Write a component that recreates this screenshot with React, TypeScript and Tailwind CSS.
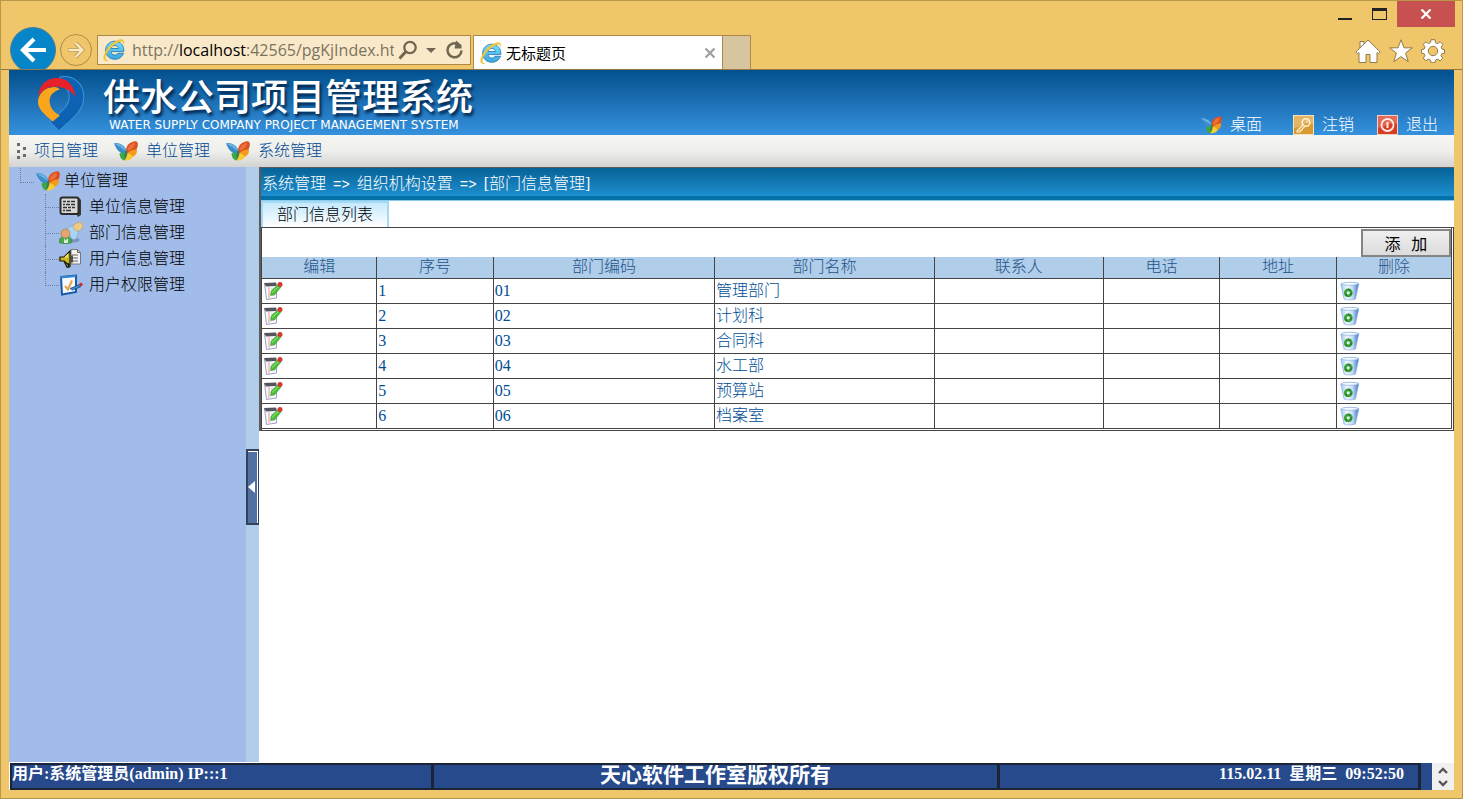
import React from "react";

const cjk = "font-['Liberation_Serif','Noto_Sans_CJK_SC',sans-serif]";

function IeLogo() {
  return (
    <svg viewBox="0 0 24 24" className="h-6 w-6 shrink-0">
      <defs>
        <linearGradient id="ie" x1="0" y1="0" x2="0" y2="1">
          <stop offset="0" stopColor="#7fdcf8" />
          <stop offset="0.5" stopColor="#55c3ef" />
          <stop offset="1" stopColor="#3aa5de" />
        </linearGradient>
      </defs>
      <path
        d="M12.800 3.200c-5.200 0-9.200 3.900-9.200 9.100 0 5.300 4 9 9.200 9 4.200 0 7.300-2.200 8.700-6h-5.600c-.7 1.200-1.700 1.700-3.100 1.700-2.200 0-3.700-1.300-3.800-3.400h12.800c.5-6.100-3.200-10.400-9-10.400zm-3.700 7.300c.3-1.900 1.700-3 3.700-3s3.400 1.100 3.600 3z"
        fill="url(#ie)" stroke="#1c74b0" strokeWidth="0.800"
      />
      <path
        d="M5.500 22.600c-4.300.6-4.600-3.100-2.500-7.700C5.500 9.400 11.500 3.600 16.800 2c3.800-1.200 5.700.3 4.700 3.700.1-2.300-1.500-2.900-4.300-1.900C12.400 5.600 7.200 10.500 4.600 15.600c-1.800 3.600-1.900 6.400.9 7z"
        fill="#fbcf3a" stroke="#dda21c" strokeWidth="0.400"
      />
    </svg>
  );
}

function Butterfly({ small = false }: { small?: boolean }) {
  return (
    <svg viewBox="0 0 24 20" className={small ? "h-[18px] w-[21px] shrink-0" : "h-5 w-6 shrink-0"}>
      <path d="M0 2.200C4.500 1.500 10.500 3.500 13 10.500L12.500 14C6.500 13 2 8.500 0 2.200z" fill="#3a8ccb" />
      <path d="M0 2.200C5 2 10.500 4.500 12.800 11 8 6.800 4 5 0 2.200z" fill="#6cb4e0" />
      <path d="M5.500 12.500c2-1.200 5-1 7 .5 1 3-.3 5-2 6.500-3-.3-4.800-3.500-5-7z" fill="#3aa845" />
      <path d="M12.800 12.500c-2-5.500 1-11 8-12.200 3-.4 3.400 2.200 2.800 5.200-.8 4-4.500 6.200-10.800 7z" fill="#dd4f20" />
      <path d="M13.500 10C13.500 6 16 2.500 21 1.500 21.500 5.500 18 9 13.500 10z" fill="#ea7038" />
      <path d="M12.800 12.500c3.500-3 7-4.500 10.200-4 .2 3.500-1.500 6.500-5 7.500z" fill="#f39a1c" />
      <path d="M12.600 12c2.600.3 5.400 1.500 6.400 4-1.500 2.800-5.500 4-8.500 3.300 1.300-2 2-4.300 2.100-7.300z" fill="#f8cc35" />
      <path d="M12.200 8.500c1.200 1.500 1.500 4 .7 6.500l-2.200 4c-.7-3.500-.2-7.500 1.500-10.500z" fill="#3d7f4f" />
    </svg>
  );
}

function BrandLogo() {
  return (
    <svg viewBox="0 0 50 58" className="h-[60px] w-[52px] shrink-0">
      <path d="M24 3C36 0 47 9 47 22c0 14-11 21-24 33l-9-9c10-9 19-14 19-24 0-5-3-10-9-12z" fill="#0d62b4" stroke="#3f93d8" strokeWidth="1" />
      <path d="M3 24c3-8 8-11 13-11 4-1 6 0 8 2-7 2-10 6-10 11 0 6 4 11 10 14l-7 6C9 39 1 33 3 24z" fill="#faa51b" />
      <path d="M3 22C4 9 13 3 23 4c9 0 15 8 16 18-4-5-8-8-14-9-8-3-18 1-22 9z" fill="#e8202a" />
    </svg>
  );
}

function KeyIcon() {
  return (
    <svg viewBox="0 0 21 20" className="h-5 w-[21px] shrink-0">
      <rect x="0.500" y="0.500" width="20" height="19" fill="#d89b32" stroke="#f6e3ba" />
      <path d="M1 1h19v8C13 7 7 12 1 13z" fill="#e5b566" />
      <circle cx="13" cy="7.500" r="3.800" fill="none" stroke="#fff3d8" strokeWidth="1.500" />
      <path d="M10 10l-6 6v1h3l.5-1.500 1.500-.5.5-1.500 2-1.500" fill="none" stroke="#fff3d8" strokeWidth="1.200" />
      <circle cx="14" cy="6.500" r="0.900" fill="#fff3d8" />
    </svg>
  );
}

function PowerIcon() {
  return (
    <svg viewBox="0 0 21 20" className="h-5 w-[21px] shrink-0">
      <rect x="0.500" y="0.500" width="20" height="19" fill="#d63d22" stroke="#f7cfc4" />
      <path d="M1 1h19v8C13 7 7 12 1 13z" fill="#e26a54" />
      <circle cx="10.500" cy="10" r="6" fill="none" stroke="#ffe9e4" strokeWidth="1.800" />
      <path d="M10.500 7v6" stroke="#ffe9e4" strokeWidth="2" />
    </svg>
  );
}

function BoardIcon() {
  return (
    <svg viewBox="0 0 22 22" className="h-[22px] w-[22px] shrink-0">
      <path d="M3 2h17l2 2v15l-3 2-1-2H3z" fill="#3b3b3b" />
      <rect x="1.500" y="1.500" width="18" height="16.500" rx="2" fill="#d8d8d8" stroke="#2b2b2b" strokeWidth="2" />
      <path d="M4 5.500h3m1 0h3m1 0h4M4 8.500h2m1 0h4m1 0h4M4 11.500h4m1 0h3m1 0h3M4 14.500h2m1 0h5" stroke="#333" strokeWidth="1.500" />
    </svg>
  );
}

function PeopleIcon() {
  return (
    <svg viewBox="0 0 24 22" className="h-[22px] w-6 shrink-0">
      <ellipse cx="15" cy="18" rx="5.500" ry="2.500" fill="#7d93c4" />
      <path d="M8 6l8-3.500 4 4.500-2 8c-1 3-4 3-6 1z" fill="#a9d6f5" stroke="#6ba3d0" strokeWidth="0.600" />
      <path d="M14 4c2-3.500 8-4.500 9.500-2 1 3-1 6.500-4 7-3 0-5.500-2-5.500-5z" fill="#ecc98b" stroke="#c0954e" strokeWidth="0.600" />
      <path d="M0 20.500c0-4 2-6 6-6s7 2 7 6c-3 1.500-9.500 1.500-13 0z" fill="#4aa84e" stroke="#2d7d36" strokeWidth="0.600" />
      <path d="M5 16l1.500 2.500L9 16v5H5z" fill="#d9efd6" />
      <circle cx="6.500" cy="11.500" r="4.500" fill="#e3a672" stroke="#b0713a" strokeWidth="0.600" />
    </svg>
  );
}

function SpeakerIcon() {
  return (
    <svg viewBox="0 0 22 22" className="h-[22px] w-[22px] shrink-0">
      <path d="M12 1.500h6.500l3 3V16H12z" fill="#f3f3f3" stroke="#777" />
      <path d="M18.500 1.500v3h3M13 7h6M13 10h6M13 13h6" fill="none" stroke="#666" />
      <path d="M1 9h4l6-6v15l-6-5H1z" fill="#cdb422" stroke="#191900" strokeWidth="1.200" />
      <path d="M3 9.500h2l4-4v4z" fill="#f2e56e" />
      <path d="M5 13l3 6h2l-1-4M13 7.500v7" fill="none" stroke="#191900" strokeWidth="1.300" />
    </svg>
  );
}

function ChecklistIcon() {
  return (
    <svg viewBox="0 0 24 22" className="h-[22px] w-6 shrink-0">
      <path d="M2 3l15-1.500V18L3 20.500z" fill="#f6f9ff" stroke="#165ba8" strokeWidth="2" />
      <path d="M1 3.500L17 2" stroke="#3584d0" strokeWidth="2" />
      <path d="M6 12l3 3.500L13 6.500" fill="none" stroke="#e9a13b" strokeWidth="2" />
      <path d="M11 14.500l9.500-4 1 2.500-8 3z" fill="#3e8bd2" stroke="#183f78" strokeWidth="0.700" />
      <circle cx="22" cy="10.500" r="1.700" fill="#c8302a" />
    </svg>
  );
}

function EditIcon() {
  return (
    <svg viewBox="0 0 20 20" className="h-5 w-5">
      <path d="M1.500 2.500h12V17l-10 1.500z" fill="#f7f7fc" stroke="#9ea1c2" strokeWidth="1" />
      <path d="M1 2l12-.5V5l-10 .5z" fill="#55555d" />
      <path d="M6 6v11" stroke="#f2c4bd" strokeWidth="1.800" />
      <path d="M8 8h3" stroke="#c6c6d8" />
      <path d="M7.500 14.500l.7-4.500L14.500 4l3.500 2-6.500 8z" fill="#4cbe38" stroke="#338c2a" strokeWidth="0.500" />
      <path d="M9 11.500l7-6.500" stroke="#9be97c" />
      <circle cx="17" cy="3.500" r="2.500" fill="#d5392c" />
    </svg>
  );
}

function RecycleIcon() {
  return (
    <svg viewBox="0 0 20 20" className="h-5 w-5">
      <defs>
        <linearGradient id="bin" x1="0" y1="0" x2="1" y2="0">
          <stop offset="0" stopColor="#9cc3f0" />
          <stop offset="0.350" stopColor="#f2f8fe" />
          <stop offset="0.650" stopColor="#c4dbf6" />
          <stop offset="1" stopColor="#3874c8" />
        </linearGradient>
      </defs>
      <path d="M.8 3C6 1 13 1 18.800 2.500L15.500 18c-3 1.300-8 1.300-11.500 0z" fill="url(#bin)" stroke="#7fa7dc" strokeWidth="0.600" />
      <ellipse cx="9.800" cy="2.800" rx="8.500" ry="1.500" fill="#f5faff" stroke="#8db0de" strokeWidth="0.700" />
      <circle cx="8.300" cy="11.800" r="3" fill="none" stroke="#3aa436" strokeWidth="2.800" />
      <path d="M8 8l2.500 1.500M5 13.500l2 1.500M11.500 11.500l-1 2.500" stroke="#237c22" strokeWidth="1.200" />
    </svg>
  );
}

const treeItems = [
  { label: "单位信息管理", icon: <BoardIcon /> },
  { label: "部门信息管理", icon: <PeopleIcon /> },
  { label: "用户信息管理", icon: <SpeakerIcon /> },
  { label: "用户权限管理", icon: <ChecklistIcon /> },
];

const columns = [
  { label: "编辑", width: "w-[9.700%]" },
  { label: "序号", width: "w-[9.800%]" },
  { label: "部门编码", width: "w-[18.600%]" },
  { label: "部门名称", width: "w-[18.500%]" },
  { label: "联系人", width: "w-[14.200%]" },
  { label: "电话", width: "w-[9.800%]" },
  { label: "地址", width: "w-[9.800%]" },
  { label: "删除", width: "w-[9.600%]" },
];

const departments = ["管理部门", "计划科", "合同科", "水工部", "预算站", "档案室"];

function BrowserChrome() {
  return (
    <header className="border-b border-[#8f7a45]">
      <div className="flex h-[26px] items-start justify-end pr-[7px]">
        <button aria-label="最小化" className="flex h-[26px] w-8 items-end justify-center pb-[7px]">
          <span className="h-[2px] w-[14px] bg-[#222]" />
        </button>
        <button aria-label="最大化" className="flex h-[26px] w-9 items-center justify-center">
          <span className="h-3 w-[15px] border border-t-[3px] border-[#222]" />
        </button>
        <button aria-label="关闭" className="flex h-[26px] w-[58px] items-center justify-center bg-[#c75050]">
          <svg viewBox="0 0 12 10" className="h-[10px] w-3">
            <path d="M1.500.5l9 9M10.500.5l-9 9" stroke="#fff" strokeWidth="2.200" />
          </svg>
        </button>
      </div>
      <div className="flex h-[42px] overflow-hidden pl-[9px]">
        <button aria-label="后退" className="flex h-[46px] w-[46px] shrink-0 items-center justify-center rounded-full border border-[#4f7f92] bg-[#0686c8]">
          <svg viewBox="0 0 26 26" className="h-[26px] w-[26px]">
            <path d="M14 2L3 13l11 11M3 13h23" fill="none" stroke="#fff" strokeWidth="4.200" />
          </svg>
        </button>
        <button aria-label="前进" className="mt-[7px] ml-1 flex h-8 w-8 shrink-0 items-center justify-center rounded-full border border-[#b08c45]">
          <svg viewBox="0 0 18 18" className="h-[18px] w-[18px]">
            <path d="M8.500 2l7 7-7 7M15 9H1" fill="none" stroke="#b99751" strokeWidth="4" />
            <path d="M8.500 2l7 7-7 7M15 9H1.500" fill="none" stroke="#fbe9c4" strokeWidth="2.400" />
          </svg>
        </button>
        <div className="mt-2 ml-[5px] flex h-[30px] w-[374px] shrink-0 items-center border border-[#ab8a45] bg-[#fae9c8] pr-1 pl-1">
          <IeLogo />
          <div className="ml-[6px] w-[262px] overflow-hidden font-['Open_Sans',sans-serif] text-[16px] leading-6 whitespace-nowrap text-[#7a7361]">
            http://<span className="text-black">localhost</span>:42565/pgKjIndex.ht
          </div>
          <button aria-label="搜索" className="ml-1">
            <svg viewBox="0 0 20 20" className="h-5 w-5">
              <circle cx="12" cy="7.500" r="5.700" fill="none" stroke="#6f6751" strokeWidth="2.300" />
              <path d="M8 11.500L1.500 18.500" stroke="#6f6751" strokeWidth="3" />
            </svg>
          </button>
          <button aria-label="地址列表" className="ml-2">
            <svg viewBox="0 0 10 5" className="h-[5px] w-[10px]"><path d="M0 0h10L5 5z" fill="#6f6751" /></svg>
          </button>
          <button aria-label="刷新" className="ml-[9px]">
            <svg viewBox="0 0 20 20" className="h-5 w-5">
              <path d="M12.500 4A7 7 0 1 0 16.500 10.500" fill="none" stroke="#6f6751" strokeWidth="2.500" />
              <path d="M11 .5L16.500 5v3.500H9.500z" fill="#6f6751" />
            </svg>
          </button>
        </div>
        <div className="mt-2 ml-[2px] flex w-[250px] shrink-0 items-center border border-b-0 border-[#ab8a45] bg-white pr-[6px] pl-[5px]">
          <IeLogo />
          <span className="ml-[3px] font-['Noto_Sans_CJK_SC',sans-serif] text-[15px] leading-6 text-black">无标题页</span>
          <button aria-label="关闭标签" className="ml-auto">
            <svg viewBox="0 0 12 12" className="h-3 w-3"><path d="M1.500 1.500l9 9M10.500 1.500l-9 9" stroke="#a0a0a0" strokeWidth="2.300" /></svg>
          </button>
        </div>
        <button aria-label="新标签" className="mt-2 w-7 shrink-0 border border-b-0 border-l-0 border-[#ab8a45] bg-[#d7c59f]" />
        <div className="ml-auto flex items-center gap-2 pt-[6px] pr-[17px]">
          <button aria-label="主页">
            <svg viewBox="0 0 26 26" className="h-[26px] w-[26px]">
              <path d="M13 2L.8 14l1.700 1.800L4 14.500v10h7v-8h4v8h7v-10l1.500 1.300 1.700-1.800L13 2 9 6V3.500H5V10z" fill="#fff" stroke="#8f7a4b" strokeWidth="1" />
            </svg>
          </button>
          <button aria-label="收藏夹">
            <svg viewBox="0 0 24 24" className="h-6 w-6">
              <path d="M12 .8l3 8h8.300l-6.700 5.200 2.600 8.600L12 17.700l-7.200 4.900L7.400 14 .7 8.800H9z" fill="#fff" stroke="#8f7a4b" strokeWidth="1" />
            </svg>
          </button>
          <button aria-label="工具">
            <svg viewBox="0 0 24 24" className="h-6 w-6">
              <path fillRule="evenodd" d="M10 .7h4l.5 3 2.200.9 2.500-1.800 2.700 2.700-1.700 2.600.8 2 2.500.4v3.600l-2.700.6-.8 2 1.800 2.500-2.700 2.700-2.500-1.800-2.100.9-.5 2.700h-4l-.5-2.700-2.200-.9-2.500 1.700-2.600-2.700L4 16.700l-.9-2.100-2.600-.5v-3.600l2.600-.4.9-2.200-1.800-2.500 2.700-2.600 2.500 1.700 2.100-.9zM12 7.300a4.700 4.700 0 1 0 0 9.400 4.700 4.700 0 0 0 0-9.400z" fill="#fff" stroke="#8f7a4b" strokeWidth="1" />
            </svg>
          </button>
        </div>
      </div>
    </header>
  );
}

function AppHeader() {
  return (
    <div className="flex h-[65px] items-start justify-between bg-linear-to-b from-[#02508e] to-[#3592de] pl-[26px]">
      <div className="flex items-start">
        <div className="pt-1"><BrandLogo /></div>
        <div className="ml-4 text-white">
          <h1 className="pt-1 font-['Noto_Sans_CJK_SC',sans-serif] text-[37px] leading-[42px] font-medium whitespace-nowrap [text-shadow:2px_3px_3px_#02264d]">
            供水公司项目管理系统
          </h1>
          <p className="pt-[2px] pl-[6px] font-['DejaVu_Sans',sans-serif] text-[12px] leading-[14px] whitespace-nowrap">
            WATER SUPPLY COMPANY PROJECT MANAGEMENT SYSTEM
          </p>
        </div>
      </div>
      <nav className={`flex gap-[23px] self-end pr-4 text-[16px] leading-[21px] font-light text-white ${cjk}`}>
        <a href="#desktop" className="flex items-center gap-2 pr-2"><Butterfly small />桌面</a>
        <a href="#logout" className="flex items-center gap-2"><KeyIcon />注销</a>
        <a href="#exit" className="flex items-center gap-2"><PowerIcon />退出</a>
      </nav>
    </div>
  );
}

function MenuBar() {
  return (
    <nav className={`flex h-8 items-center bg-linear-to-b from-[#f5f5f1] via-[#efefec] to-[#d3d3d2] pl-2 text-[16px] leading-6 font-light text-[#004a94] ${cjk}`}>
      <svg viewBox="0 0 10 18" className="mr-[7px] h-[18px] w-[10px]">
        <path d="M0 1h3v3H0zM0 8h3v3H0zM0 14h3v3H0zM6 5h3v3H6zM6 12h3v3H6z" fill="#6b6b6b" />
      </svg>
      <a href="#project">项目管理</a>
      <a href="#unit" className="ml-4 flex items-center gap-2"><Butterfly />单位管理</a>
      <a href="#system" className="ml-4 flex items-center gap-2"><Butterfly />系统管理</a>
    </nav>
  );
}

function Sidebar() {
  return (
    <aside className={`w-[237px] shrink-0 bg-[#a1bce8] pt-px text-[16px] leading-[26px] font-light text-black ${cjk}`}>
      <div className="flex h-[26px] items-center pl-[11px]">
        <span className="mr-[2px] h-[15px] w-[14px] self-start border-b border-l border-dotted border-[#6f7f9f]" />
        <Butterfly />
        <a href="#unit" className="ml-1">单位管理</a>
      </div>
      <ul className="pl-9">
        {treeItems.map((item, i) => (
          <li key={item.label} className="flex h-[26px] items-center">
            <span className={`flex w-[14px] flex-col self-stretch ${i < 3 ? "border-l border-dotted border-[#6f7f9f]" : ""}`}>
              <span className={`h-[14px] border-b border-dotted border-[#6f7f9f] ${i < 3 ? "" : "border-l"}`} />
            </span>
            <span className="flex w-[30px] shrink-0">{item.icon}</span>
            <a href="#item">{item.label}</a>
          </li>
        ))}
      </ul>
    </aside>
  );
}

function Arrow() {
  return <span className="px-[7px] font-['Liberation_Mono',monospace] text-[14px] font-normal">=&gt;</span>;
}

function Content() {
  return (
    <main className={`min-w-0 flex-1 bg-white text-[16px] font-light ${cjk}`}>
      <div className="border-t border-l-2 border-[#5b5b5b]">
        <div className="h-8 border-b-4 border-[#0370a6] bg-linear-to-b from-[#066397] to-[#1e8fd0] pl-px leading-[31px] whitespace-nowrap text-white">
          系统管理<Arrow />组织机构设置<Arrow />[部门信息管理]
        </div>
        <div className="border-t border-[#8ccbed]">
          <button className="h-[26px] w-32 border-2 border-b-0 border-[#a3daf3] bg-linear-to-b from-[#c5e9fc] to-white leading-[22px] text-black">
            部门信息列表
          </button>
        </div>
        <div className="border-t border-r-[3px] border-b-[3px] border-l border-[#444] [border-bottom-style:double] [border-right-style:double]">
          <div className="flex h-[29px] justify-end pt-px">
            <button className="h-7 w-[90px] border-2 border-[#858585] bg-linear-to-b from-[#efefef] to-[#dcdcdc] font-['Noto_Sans_CJK_SC',sans-serif] text-[16px] leading-6 font-normal whitespace-pre text-black">
              {"添   加"}
            </button>
          </div>
          <table className="w-full table-fixed border-separate border-spacing-0">
            <thead>
              <tr className="h-[22px] bg-[#b0cde9]">
                {columns.map((c) => (
                  <th key={c.label} className={`${c.width} border-r border-b border-[#444] p-0 pb-px leading-5 font-light text-[#1f548a] last:border-r-0`}>
                    {c.label}
                  </th>
                ))}
              </tr>
            </thead>
            <tbody className="text-[#004d96]">
              {departments.map((name, i) => (
                <tr key={name} className="h-[25px] last:h-6 [&>td]:border-r [&>td]:border-b [&>td]:border-[#444] [&>td]:px-px [&>td]:py-0 [&>td]:leading-[22px] [&>td:last-child]:border-r-0 last:[&>td]:border-b-0">
                  <td><button aria-label="编辑" className="flex items-center"><EditIcon /></button></td>
                  <td>{i + 1}</td>
                  <td>{`0${i + 1}`}</td>
                  <td>{name}</td>
                  <td /><td /><td />
                  <td><button aria-label="删除" className="ml-[2px] flex items-center"><RecycleIcon /></button></td>
                </tr>
              ))}
            </tbody>
          </table>
        </div>
      </div>
    </main>
  );
}

function StatusBar() {
  return (
    <footer className="flex h-7 border-t border-l border-white bg-[#264a8b] font-['Liberation_Serif','Noto_Sans_CJK_SC',serif] text-[16px] leading-[17px] font-bold text-white">
      <div className="w-[424px] overflow-hidden border-2 border-r-[3px] border-[#1b2536] whitespace-nowrap">用户:系统管理员(admin) IP:::1</div>
      <div className="flex-1 overflow-hidden border-y-2 border-[#1b2536] text-center text-[21px] leading-[21px] whitespace-nowrap">天心软件工作室版权所有</div>
      <div className="w-[424px] overflow-hidden border-2 border-x-[3px] border-[#1b2536] pr-[14px] text-right whitespace-pre">115.02.11  星期三  09:52:50</div>
      <div className="ml-[11px] flex w-[22px] flex-col items-center justify-center gap-[6px] bg-[#f0f0f0]">
        <button aria-label="向上" className="flex"><svg viewBox="0 0 10 7" className="h-[7px] w-[10px]"><path d="M1 6l4-4 4 4" fill="none" stroke="#555" strokeWidth="2.400" /></svg></button>
        <button aria-label="向下" className="flex"><svg viewBox="0 0 10 7" className="h-[7px] w-[10px]"><path d="M1 1l4 4 4-4" fill="none" stroke="#555" strokeWidth="2.400" /></svg></button>
      </div>
    </footer>
  );
}

export default function App() {
  return (
    <div className="flex min-h-screen flex-col border border-[#b8964a] bg-[#efc76a]">
      <BrowserChrome />
      <div className="mx-2 mb-2 flex flex-1 flex-col">
        <AppHeader />
        <MenuBar />
        <div className="flex flex-1">
          <Sidebar />
          <div className="flex w-[13px] shrink-0 flex-col justify-center bg-[#b0cde9] pt-11">
            <button aria-label="收起" className="flex h-[76px] w-[13px] items-center border-2 border-r border-[#33415f] bg-[#5171a3]">
              <span className="flex h-full w-full items-center border-t border-r border-white">
                <svg viewBox="0 0 7 12" className="h-3 w-[7px]"><path d="M7 0v12L0 6z" fill="#fff" /></svg>
              </span>
            </button>
          </div>
          <Content />
        </div>
        <StatusBar />
      </div>
    </div>
  );
}
